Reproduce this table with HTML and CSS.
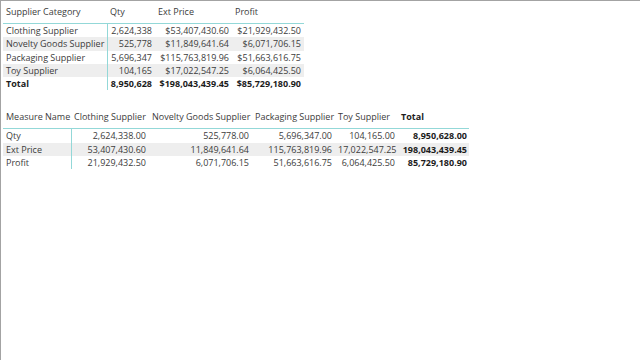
FILE: index.html
```html
<!DOCTYPE html>
<html lang="en">
<head>
<meta charset="utf-8">
<title>Supplier Category</title>
<link rel="stylesheet" href="styles.css">
</head>
<body>
<div class="canvas">
  <table class="grid grid-top">
    <colgroup>
      <col class="w-cat"><col class="w-qty"><col class="w-ext"><col class="w-profit">
    </colgroup>
    <thead>
      <tr><th>Supplier Category</th><th>Qty</th><th>Ext Price</th><th>Profit</th></tr>
    </thead>
    <tbody>
      <tr><td class="lbl">Clothing Supplier</td><td class="num">2,624,338</td><td class="num">$53,407,430.60</td><td class="num">$21,929,432.50</td></tr>
      <tr class="alt"><td class="lbl">Novelty Goods Supplier</td><td class="num">525,778</td><td class="num">$11,849,641.64</td><td class="num">$6,071,706.15</td></tr>
      <tr><td class="lbl">Packaging Supplier</td><td class="num">5,696,347</td><td class="num">$115,763,819.96</td><td class="num">$51,663,616.75</td></tr>
      <tr class="alt"><td class="lbl">Toy Supplier</td><td class="num">104,165</td><td class="num">$17,022,547.25</td><td class="num">$6,064,425.50</td></tr>
      <tr class="total"><td class="lbl">Total</td><td class="num">8,950,628</td><td class="num">$198,043,439.45</td><td class="num">$85,729,180.90</td></tr>
    </tbody>
  </table>

  <table class="grid grid-matrix">
    <colgroup>
      <col class="w-measure"><col class="w-cloth"><col class="w-novelty"><col class="w-pack"><col class="w-toy"><col class="w-total">
    </colgroup>
    <thead>
      <tr><th>Measure Name</th><th>Clothing Supplier</th><th>Novelty Goods Supplier</th><th>Packaging Supplier</th><th>Toy Supplier</th><th class="bold">Total</th></tr>
    </thead>
    <tbody>
      <tr><td class="lbl">Qty</td><td class="num">2,624,338.00</td><td class="num">525,778.00</td><td class="num">5,696,347.00</td><td class="num">104,165.00</td><td class="num bold last">8,950,628.00</td></tr>
      <tr class="alt"><td class="lbl">Ext Price</td><td class="num">53,407,430.60</td><td class="num">11,849,641.64</td><td class="num">115,763,819.96</td><td class="num">17,022,547.25</td><td class="num bold last">198,043,439.45</td></tr>
      <tr><td class="lbl">Profit</td><td class="num">21,929,432.50</td><td class="num">6,071,706.15</td><td class="num">51,663,616.75</td><td class="num">6,064,425.50</td><td class="num bold last">85,729,180.90</td></tr>
    </tbody>
  </table>
</div>
</body>
</html>
```

FILE: styles.css
```css
* { box-sizing: border-box; }

html, body {
  margin: 0;
  padding: 0;
  background: #ffffff;
}

.canvas {
  width: 640px;
  height: 360px;
  border-top: 1px solid #a3a3a3;
  border-left: 1px solid #a3a3a3;
  padding: 0 0 0 2px;
  font-family: "Open Sans", "Noto Sans", "DejaVu Sans", sans-serif;
  font-size: 9px;
  color: #3c3c3c;
  overflow: hidden;
}

.grid {
  border-collapse: collapse;
  table-layout: fixed;
  white-space: nowrap;
}

.grid th {
  font-weight: normal;
  text-align: left;
  padding: 4px 3px 4px 3px;
  line-height: 14px;
  height: 22px;
  border-bottom: 1px solid #93d8d8;
  color: #3c3c3c;
}

.grid td {
  padding: 0 3px;
  height: 13.3px;
  line-height: 13.3px;
}

.grid td.lbl {
  border-right: 1px solid #93d8d8;
}

.grid td.num {
  text-align: right;
}

.grid tr.alt td {
  background: #eeeeee;
}

.grid tr.total td,
.grid .bold {
  font-weight: bold;
  color: #1c1c1c;
}

.grid td.last {
  padding-right: 2px;
}

/* top table */
.grid-top { width: 301px; }
.w-cat { width: 104px; }
.w-qty { width: 48px; }
.w-ext { width: 77px; }
.w-profit { width: 72px; }

/* matrix */
.grid-matrix {
  width: 466px;
  margin-top: 16px;
}
.w-measure { width: 68px; }
.w-cloth { width: 78px; }
.w-novelty { width: 103px; }
.w-pack { width: 83px; }
.w-toy { width: 63px; }
.w-total { width: 71px; }
```
